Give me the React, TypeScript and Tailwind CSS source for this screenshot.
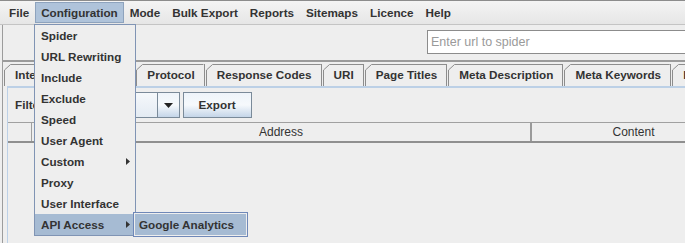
import React from "react";

const menus = ["File", "Configuration", "Mode", "Bulk Export", "Reports", "Sitemaps", "Licence", "Help"];
const tabs = ["Internal", "External", "Protocol", "Response Codes", "URI", "Page Titles", "Meta Description", "Meta Keywords", "H1"];
const items = ["Spider", "URL Rewriting", "Include", "Exclude", "Speed", "User Agent", "Custom", "Proxy", "User Interface", "API Access"];

function Arrow() {
  return (
    <svg width="4" height="7" viewBox="0 0 4 7" className="shrink-0">
      <path d="M0 0 L4 3.5 L0 7 Z" fill="#333333" />
    </svg>
  );
}

function Tab({ label }: { label: string }) {
  return (
    <div className="relative h-[22px] pl-[11px] pr-[9px] flex items-center border-r border-[#8d8d8d] shrink-0">
      <svg className="absolute inset-0 pointer-events-none overflow-visible" width="100%" height="100%">
        <line x1="0.5" y1="22" x2="0.5" y2="6" stroke="#8d8d8d" strokeWidth="1" />
        <line x1="0.5" y1="6" x2="6.5" y2="0.5" stroke="#8d8d8d" strokeWidth="1" />
        <line x1="6.5" y1="0.5" x2="100%" y2="0.5" stroke="#8d8d8d" strokeWidth="1" />
      </svg>
      <span className="relative whitespace-nowrap">{label}</span>
    </div>
  );
}

export default function App() {
  return (
    <div className="relative w-[685px] h-[243px] overflow-hidden bg-[#eeeeee] text-[#333333] font-['Liberation_Sans',Arial,sans-serif] flex flex-col">
      {/* Menu bar */}
      <div className="h-[25px] shrink-0 flex items-stretch pl-[3px] pt-[1px] pb-[1px] border-t border-[#8c8c8c] border-b border-b-[#c4c4c4] bg-gradient-to-b from-[#f4f4f4] to-[#e6e6e6] text-[11.7px] font-bold">
        {menus.map((m) =>
          m === "Configuration" ? (
            <div key={m} className="flex items-center px-[5px] bg-[#afc3da] border border-[#8ea3bd] whitespace-nowrap">
              {m}
            </div>
          ) : (
            <div key={m} className="flex items-center px-[6px] whitespace-nowrap">
              {m}
            </div>
          )
        )}
      </div>

      {/* Body */}
      <div className="flex-1 flex flex-col ml-[2px] border-l border-[#9c9c9c]">
        {/* Toolbar */}
        <div className="h-[35px] shrink-0 flex justify-end items-start pt-[5px]">
          <div className="w-[264px] -mr-[6px] h-[24px] bg-white border border-[#8c8c8c] flex items-center pl-[3px] text-[12.5px] text-[#9a9a9a] font-normal">
            Enter url to spider
          </div>
        </div>
        <div className="h-[2px] shrink-0 bg-[#9a9a9a]" />

        {/* Tabs */}
        <div className="h-[24px] shrink-0 flex items-end gap-[1px] pl-[1px] text-[11.7px] font-bold">
          {tabs.map((t) => (
            <Tab key={t} label={t} />
          ))}
        </div>

        {/* Content panel */}
        <div className="flex-1 flex flex-col ml-[4px] border-t-2 border-l border-[#bcd0e6]">
          {/* Filter row */}
          <div className="h-[34px] shrink-0 flex items-center pl-[7px] text-[11.7px] font-bold">
            <span>Filter</span>
            <div className="ml-[6px] w-[130px] h-[26px] flex border border-[#7a8a99] bg-gradient-to-b from-[#f5f8fb] to-[#e4ebf3]">
              <div className="flex-1" />
              <div className="w-[22px] border-l border-[#7a8a99] flex items-center justify-center bg-gradient-to-b from-[#eef4fa] via-[#f6f9fc] to-[#c4d5e8]">
                <svg width="9" height="5" viewBox="0 0 9 5">
                  <path d="M0 0 L9 0 L4.5 5 Z" fill="#222222" />
                </svg>
              </div>
            </div>
            <div className="ml-[3px] w-[69px] h-[26px] flex items-center justify-center border border-[#7a8a99] bg-gradient-to-b from-[#eef4fa] via-[#f6f9fc] to-[#c4d5e8]">
              Export
            </div>
          </div>

          {/* Table header */}
          <div className="h-[21px] shrink-0 flex border-t border-[#a0a0a0] border-b-2 border-b-[#8f8f8f] text-[12px] font-normal">
            <div className="w-[24px] border-r border-[#a0a0a0]" />
            <div className="w-[500px] border-r-2 border-[#9a9a9a] flex items-center justify-center">Address</div>
            <div className="flex-1 flex items-center justify-center pl-[50px]">Content</div>
          </div>
          <div className="flex-1" />
        </div>
      </div>

      {/* Configuration popup menu */}
      <div className="absolute left-[34px] top-[24px] w-[102px] border border-[#8094b4] bg-[#eeeeee] text-[11.7px] font-bold">
        {items.map((it) => {
          const sub = it === "Custom" || it === "API Access";
          const sel = it === "API Access";
          return (
            <div
              key={it}
              className={
                sel
                  ? "h-[21px] flex items-center justify-between pl-[6px] pr-[5px] bg-[#a6bbd3]"
                  : "h-[21px] flex items-center justify-between pl-[6px] pr-[5px]"
              }
            >
              <span className="whitespace-nowrap">{it}</span>
              {sub ? <Arrow /> : null}
            </div>
          );
        })}
      </div>

      {/* Submenu */}
      <div className="absolute left-[133px] top-[212px] w-[115px] h-[25px] border border-[#6f88b8] bg-[#eeeeee] p-[1px] text-[11.7px] font-bold">
        <div className="h-full bg-[#a6bbd3] flex items-center pl-[4px] whitespace-nowrap">Google Analytics</div>
      </div>
    </div>
  );
}
